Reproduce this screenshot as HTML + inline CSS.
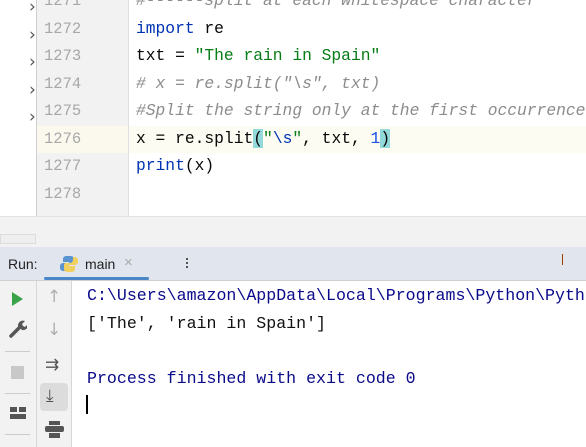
<!DOCTYPE html>
<html><head><style>
html,body{margin:0;width:586px;height:447px;overflow:hidden;background:#fff}
#f{position:relative;width:586px;height:447px;overflow:hidden;font-family:"Liberation Mono","DejaVu Sans Mono",monospace}
.a{position:absolute}
.ln{position:absolute;left:44px;width:60px;color:#a8a8a8;font-size:15.5px}
.code{position:absolute;left:136px;font-size:16.3px;white-space:pre;color:#080808}
.kw{color:#0033b3}.str{color:#067d17}.cm{color:#8c8c8c;font-style:italic}
.con{position:absolute;left:87px;font-size:16.6px;white-space:pre;color:#0a0a8a}
</style></head><body><div id="f">
<div class="a" style="left:37px;top:0;width:91px;height:216px;background:#f2f2f2;border-right:1px solid #e0e0e0"></div>
<div class="a" style="left:37px;top:126px;width:91px;height:27px;background:#fbf9ee"></div>
<div class="a" style="left:129px;top:126px;width:457px;height:27px;background:#fdfcf2"></div>
<div class="a" style="left:36px;top:0;width:1px;height:216px;background:#cfcfcf"></div>
<div class="a" style="left:29px;top:-6px;color:#555;font-size:17px;line-height:27.5px;font-family:'DejaVu Sans',sans-serif">›<br>›<br>›<br>›<br>›</div>
<div class="ln" style="top:-8px">1271</div>
<div class="ln" style="top:20px">1272</div>
<div class="ln" style="top:47px">1273</div>
<div class="ln" style="top:75px">1274</div>
<div class="ln" style="top:102px">1275</div>
<div class="ln" style="top:130px">1276</div>
<div class="ln" style="top:157px">1277</div>
<div class="ln" style="top:185px">1278</div>
<div class="code cm" style="top:-9px">#------split at each whitespace character</div>
<div class="code" style="top:19px"><span class="kw">import</span> re</div>
<div class="code" style="top:46px">txt = <span class="str">"The rain in Spain"</span></div>
<div class="code cm" style="top:74px"># x = re.split("\s", txt)</div>
<div class="code cm" style="top:101px">#Split the string only at the first occurrence</div>
<div class="code" style="top:129px">x = re.split<span style="background:#93d9d9">(</span><span class="str">"<span class="kw">\s</span>"</span>, txt, <span style="color:#1750eb">1</span><span style="background:#93d9d9">)</span></div>
<div class="code" style="top:156px"><span class="kw">print</span>(x)</div>
<div class="a" style="left:0;top:216px;width:586px;height:30px;background:#f2f2f2;border-top:1px solid #e3e3e3;border-bottom:1px solid #d6d6d6"></div>
<div class="a" style="left:0;top:234px;width:34px;height:8px;border:1px solid #ddd;background:#eee"></div>
<div class="a" style="left:0;top:247px;width:586px;height:33px;background:#e1e5ee;border-bottom:1px solid #d0d0d0"></div>
<div class="a" style="left:8px;top:256px;font-family:'Liberation Sans',sans-serif;font-size:14px;color:#222">Run:</div>
<svg class="a" style="left:60px;top:255px" width="18" height="18" viewBox="0 0 18 18"><path d="M9 1h-3a3 3 0 0 0-3 3v3h6v1H3a3 3 0 0 0-3 3v2a3 3 0 0 0 3 3h2v-3a3 3 0 0 1 3-3h4a2 2 0 0 0 2-2V4a3 3 0 0 0-3-3z" fill="#5a94d0"/><path d="M9 17h3a3 3 0 0 0 3-3v-3H9v-1h6a3 3 0 0 0 3-3V5a3 3 0 0 0-3-3h-2v3a3 3 0 0 1-3 3H6a2 2 0 0 0-2 2v4a3 3 0 0 0 3 3z" fill="#f2d060"/></svg>
<div class="a" style="left:85px;top:256px;font-family:'Liberation Sans',sans-serif;font-size:14px;color:#222">main</div>
<div class="a" style="left:124px;top:254px;font-family:'Liberation Sans',sans-serif;font-size:15px;color:#aaa">×</div>
<div class="a" style="left:44px;top:277px;width:105px;height:3px;background:#4a86c8;border-radius:2px"></div>
<div class="a" style="left:186px;top:258px;width:1px;height:10px;border-left:2px dotted #555"></div>
<div class="a" style="left:562px;top:254px;width:1px;height:11px;background:#a04000"></div>
<div class="a" style="left:0;top:281px;width:36px;height:166px;background:#f2f2f2;border-right:1px solid #d6d6d6"></div>
<div class="a" style="left:37px;top:281px;width:34px;height:166px;background:#f2f2f2;border-right:1px solid #d6d6d6"></div>
<div class="a" style="left:12px;top:292px;width:0;height:0;border-left:11px solid #3aa34a;border-top:7px solid transparent;border-bottom:7px solid transparent"></div>
<svg class="a" style="left:9px;top:320px" width="18" height="18" viewBox="0 0 18 18"><path d="M2 16l8-8" stroke="#555" stroke-width="3.5" stroke-linecap="round"/><path d="M9 6a5 5 0 0 1 7-5l-3 3 1 2 2 1 3-3a5 5 0 0 1-6 6z" fill="#555"/></svg>
<div class="a" style="left:5px;top:351px;width:25px;height:1px;background:#ccc"></div>
<div class="a" style="left:11px;top:366px;width:13px;height:13px;background:#c8c8c8"></div>
<div class="a" style="left:5px;top:393px;width:25px;height:1px;background:#ccc"></div>
<div class="a" style="left:10px;top:407px;width:7px;height:5px;background:#555"></div>
<div class="a" style="left:19px;top:407px;width:7px;height:5px;background:#555"></div>
<div class="a" style="left:10px;top:414px;width:16px;height:5px;background:#555"></div>
<div class="a" style="left:5px;top:434px;width:25px;height:1px;background:#ccc"></div>
<div class="a" style="left:47px;top:287px;color:#b0b0b0;font-size:17px;font-family:'DejaVu Sans',sans-serif">↑</div>
<div class="a" style="left:47px;top:320px;color:#b0b0b0;font-size:17px;font-family:'DejaVu Sans',sans-serif">↓</div>
<div class="a" style="left:45px;top:355px;color:#555;font-size:17px;font-family:'DejaVu Sans',sans-serif">⇉</div>
<div class="a" style="left:40px;top:383px;width:28px;height:28px;border-radius:4px;background:#dcdcdc"></div>
<div class="a" style="left:46px;top:386px;color:#555;font-size:17px;font-family:'DejaVu Sans',sans-serif">⤓</div>
<div class="a" style="left:49px;top:421px;width:11px;height:4px;background:#555"></div>
<div class="a" style="left:45px;top:426px;width:19px;height:6px;background:#555;border-radius:2px"></div>
<div class="a" style="left:49px;top:433px;width:11px;height:5px;background:#555"></div>
<div class="con" style="top:286px">C:\Users\amazon\AppData\Local\Programs\Python\Pyth</div>
<div class="con" style="top:314px;color:#111">['The', 'rain in Spain']</div>
<div class="con" style="top:369px">Process finished with exit code 0</div>
<div class="a" style="left:86px;top:395px;width:2px;height:19px;background:#000"></div>
</div></body></html>
